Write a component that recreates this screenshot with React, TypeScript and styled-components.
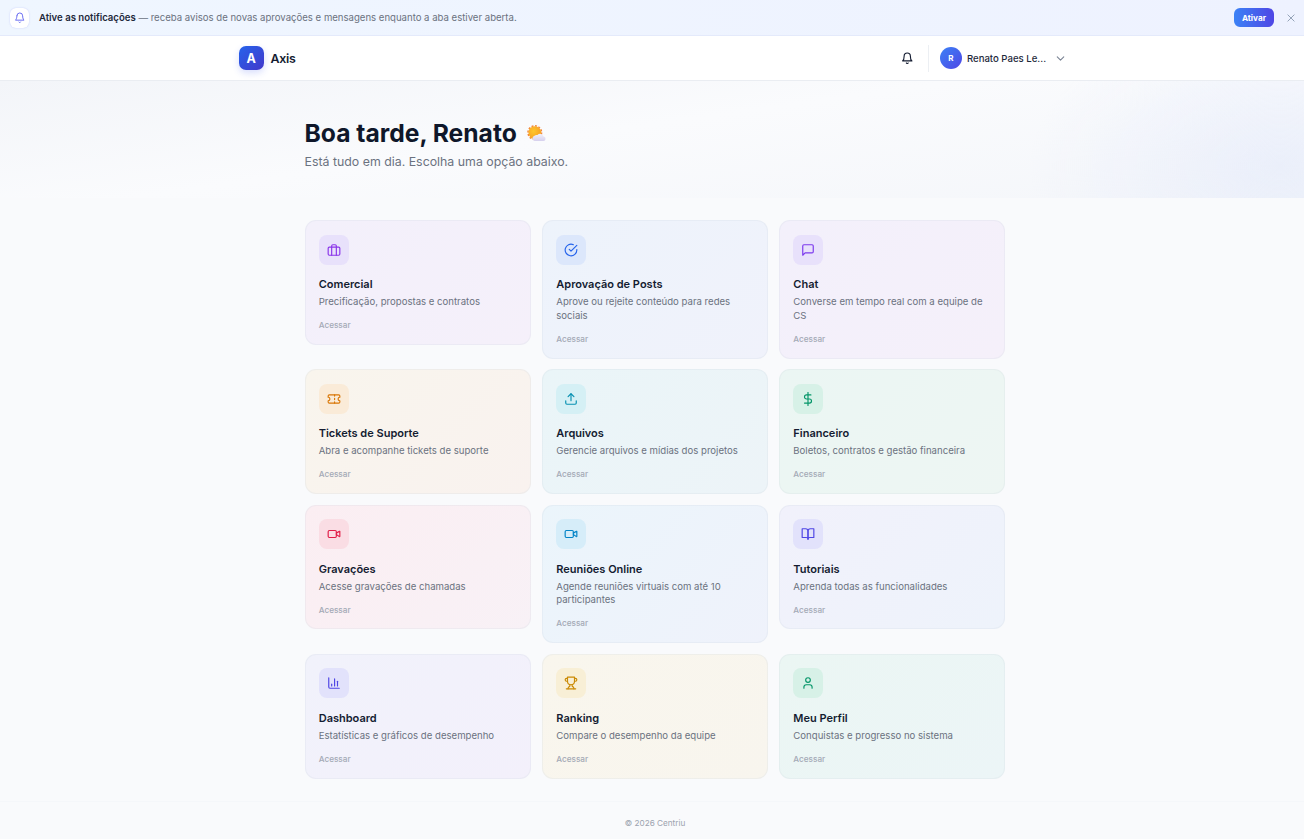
import React from 'react';
import styled, { createGlobalStyle } from 'styled-components';

const GlobalStyle = createGlobalStyle`
  * { box-sizing: border-box; }
  body {
    margin: 0;
    background: #f9fafc;
    font-family: Inter, "Liberation Sans", sans-serif;
    color: #141c31;
    overflow: hidden;
  }
  h1, h2, p { margin: 0; }
  button { font-family: inherit; border: 0; background: none; padding: 0; }
`;

const Page = styled.div`
  display: flex;
  flex-direction: column;
  height: 839px;
`;

const Banner = styled.div`
  display: flex;
  align-items: center;
  height: 36px;
  flex: none;
  padding: 0 8px 0 9.5px;
  background: linear-gradient(90deg, #eff6ff, #eef2ff);
  border-bottom: 1px solid #e4eafb;
`;

const BannerIcon = styled.span`
  display: flex;
  align-items: center;
  justify-content: center;
  width: 19.5px;
  height: 20px;
  border-radius: 6px;
  background: #fff;
  color: #6366f1;
  box-shadow: 0 0 1.5px rgba(99, 102, 241, 0.35);
`;

const BannerText = styled.p`
  flex: 1;
  margin-left: 10px;
  font-size: 9.59px;
  line-height: 14px;
  color: #6b7280;
  strong { font-weight: 600; color: #1e293b; }
`;

const ActivateButton = styled.button`
  width: 40px;
  height: 19.5px;
  border-radius: 6px;
  background: linear-gradient(90deg, #3b82f6, #4f46e5);
  color: #fff;
  font-size: 8.2px;
  font-weight: 700;
`;

const CloseButton = styled.button`
  display: flex;
  margin-left: 12px;
  color: #94a3b8;
`;

const Header = styled.header`
  flex: none;
  height: 44.5px;
  background: #fff;
  border-bottom: 1px solid #eaedf2;
`;

const HeaderInner = styled.div`
  display: flex;
  align-items: center;
  width: 827.5px;
  height: 44px;
  margin: 0 auto 0 239px;
`;

const Logo = styled.span`
  display: flex;
  align-items: center;
  justify-content: center;
  width: 24.5px;
  height: 24.5px;
  border-radius: 7px;
  background: linear-gradient(135deg, #2563eb, #4338ca);
  color: #fff;
  font-size: 12.5px;
  font-weight: 700;
  box-shadow: 0 3px 7px rgba(59, 92, 240, 0.2);
`;

const Brand = styled.span`
  flex: 1;
  margin-left: 7px;
  font-size: 12.4px;
  font-weight: 600;
  letter-spacing: -0.02em;
`;

const Divider = styled.span`
  width: 1px;
  height: 27px;
  margin: 0 10.3px 0 14.7px;
  background: #eceff3;
`;

const Avatar = styled.span`
  display: flex;
  align-items: center;
  justify-content: center;
  width: 22.4px;
  height: 22.4px;
  border-radius: 50%;
  background: linear-gradient(135deg, #3b82f6, #4f46e5);
  color: #fff;
  font-size: 8px;
  font-weight: 700;
`;

const UserName = styled.span`
  width: 86.6px;
  margin-left: 4.9px;
  font-size: 9.6px;
  font-weight: 500;
  white-space: nowrap;
  color: #1e293b;
`;

const UserChevron = styled.span`
  display: flex;
  color: #7b8494;
`;

const Hero = styled.section`
  flex: none;
  height: 117.8px;
  padding: 37px 0 0 304.5px;
  background:
    radial-gradient(ellipse 250px 150px at 1280px 85px, rgba(224, 231, 250, 0.5), rgba(224, 231, 250, 0)),
    linear-gradient(172deg, #f3f5f9 0%, #fafbfd 45%, #f4f6fa 100%);
`;

const Greeting = styled.h1`
  display: flex;
  align-items: center;
  gap: 10.5px;
  font-size: 24.65px;
  line-height: 30px;
  font-weight: 700;
  color: #0f172a;
`;

const Subtitle = styled.p`
  margin-top: 5px;
  font-size: 12.35px;
  line-height: 18px;
  color: #6b7280;
`;

const Grid = styled.main`
  display: grid;
  grid-template-columns: 226.9px 226.4px 226px;
  column-gap: 10.7px;
  row-gap: 10.5px;
  align-items: start;
  margin: 21.7px 0 0 304.5px;
`;

const Card = styled.article<{ $from: string; $to: string }>`
  padding: 13.8px 13.2px 12.9px;
  border: 1px solid rgba(203, 213, 225, 0.22);
  border-radius: 11px;
  background: linear-gradient(135deg, ${(p) => p.$from}, ${(p) => p.$to}) border-box;
`;

const IconTile = styled.span<{ $bg: string; $color: string }>`
  display: flex;
  align-items: center;
  justify-content: center;
  width: 30px;
  height: 30px;
  border-radius: 8px;
  background: ${(p) => p.$bg};
  color: ${(p) => p.$color};
`;

const CardTitle = styled.h2`
  margin-top: 11.2px;
  font-size: 11px;
  line-height: 16px;
  font-weight: 600;
`;

const CardText = styled.p`
  margin-top: 3px;
  font-size: 9.6px;
  line-height: 13.6px;
  color: #6b7280;
`;

const CardLink = styled.span`
  display: block;
  margin-top: 10.5px;
  font-size: 8.2px;
  line-height: 12px;
  font-weight: 500;
  color: #a3a9b5;
`;

const Footer = styled.footer`
  margin-top: auto;
  height: 38px;
  border-top: 1px solid #f5f7fa;
  padding: 14px 0 0 6px;
  text-align: center;
  font-size: 8.2px;
  line-height: 14px;
  color: #9ca3af;
`;

interface IconProps {
  size?: number;
  stroke?: number;
  children: React.ReactNode;
}

const Icon = ({ size = 14, stroke = 2, children }: IconProps) => (
  <svg
    width={size}
    height={size}
    viewBox="0 0 24 24"
    fill="none"
    stroke="currentColor"
    strokeWidth={stroke}
    strokeLinecap="round"
    strokeLinejoin="round"
  >
    {children}
  </svg>
);

const bell = (
  <>
    <path d="M6 8a6 6 0 0 1 12 0c0 7 3 9 3 9H3s3-2 3-9" />
    <path d="M10.3 21a1.94 1.94 0 0 0 3.4 0" />
  </>
);

const video = (
  <>
    <path d="m16 13 5.223 3.482a.5.5 0 0 0 .777-.416V7.87a.5.5 0 0 0-.752-.432L16 10.5" />
    <rect x="2" y="6" width="14" height="12" rx="2" />
  </>
);

const SunCloud = () => (
  <svg width="19" height="18" viewBox="0 0 19 18">
    <defs>
      <radialGradient id="sun" cx="40%" cy="40%">
        <stop offset="0" stopColor="#fdc62d" />
        <stop offset="1" stopColor="#f9a825" />
      </radialGradient>
      <linearGradient id="cloud" x1="0" y1="0" x2="0" y2="1">
        <stop offset="0" stopColor="#f1f1fa" />
        <stop offset="1" stopColor="#d6d0ee" />
      </linearGradient>
    </defs>
    <circle cx="7.8" cy="8.6" r="6.8" fill="none" stroke="#f2853c" strokeWidth="1.5" strokeDasharray="2 1.56" />
    <circle cx="7.8" cy="8.6" r="6.4" fill="url(#sun)" />
    <path d="M7.8 17a2.7 2.7 0 0 1-.3-5.3 3 3 0 0 1 3-.6 3.5 3.5 0 0 1 6.1 1.5 2.2 2.2 0 0 1-.5 4.4z" fill="url(#cloud)" />
  </svg>
);

const cards = [
  {
    title: 'Comercial', text: 'Precificação, propostas e contratos',
    from: '#f3f0fb', to: '#f5f0fa', bg: '#e8e1fb', color: '#8b36ea',
    icon: (<><rect x="2" y="7" width="20" height="14" rx="2" /><path d="M16 21V5a2 2 0 0 0-2-2h-4a2 2 0 0 0-2 2v16" /></>),
  },
  {
    title: 'Aprovação de Posts', text: 'Aprove ou rejeite conteúdo para redes sociais',
    from: '#edf3fb', to: '#f0f2fb', bg: '#dce7fb', color: '#2563eb',
    icon: (<><path d="M22 11.08V12a10 10 0 1 1-5.93-9.14" /><path d="m22 4-10 10.01-3-3" /></>),
  },
  {
    title: 'Chat', text: 'Converse em tempo real com a equipe de CS',
    from: '#f3f0fb', to: '#f5f0fa', bg: '#e8e1fb', color: '#7c3aed',
    icon: <path d="M21 15a2 2 0 0 1-2 2H7l-4 4V5a2 2 0 0 1 2-2h14a2 2 0 0 1 2 2z" />,
  },
  {
    title: 'Tickets de Suporte', text: 'Abra e acompanhe tickets de suporte',
    from: '#f9f5ed', to: '#f9f2ef', bg: '#faebd8', color: '#d97706',
    icon: (<><path d="M2 9a3 3 0 0 1 0 6v2a2 2 0 0 0 2 2h16a2 2 0 0 0 2-2v-2a3 3 0 0 1 0-6V7a2 2 0 0 0-2-2H4a2 2 0 0 0-2 2Z" /><path d="M13 5v2" /><path d="M13 17v2" /><path d="M13 11v2" /></>),
  },
  {
    title: 'Arquivos', text: 'Gerencie arquivos e mídias dos projetos',
    from: '#eaf5f8', to: '#edf4f8', bg: '#d5f0f5', color: '#0891b2',
    icon: (<><path d="M21 15v4a2 2 0 0 1-2 2H5a2 2 0 0 1-2-2v-4" /><path d="m17 8-5-5-5 5" /><path d="M12 3v12" /></>),
  },
  {
    title: 'Financeiro', text: 'Boletos, contratos e gestão financeira',
    from: '#ebf6f3', to: '#eef6f3', bg: '#d7f1e7', color: '#059669',
    icon: (<><path d="M12 1v22" /><path d="M17 5H9.5a3.5 3.5 0 0 0 0 7h5a3.5 3.5 0 0 1 0 7H6" /></>),
  },
  {
    title: 'Gravações', text: 'Acesse gravações de chamadas',
    from: '#fbeef2', to: '#f8f1f6', bg: '#fadde4', color: '#e11d48', icon: video,
  },
  {
    title: 'Reuniões Online', text: 'Agende reuniões virtuais com até 10 participantes',
    from: '#ebf5fb', to: '#eff2fb', bg: '#d6edf9', color: '#0284c7', icon: video,
  },
  {
    title: 'Tutoriais', text: 'Aprenda todas as funcionalidades',
    from: '#f1f1fb', to: '#eef3fb', bg: '#e2e2fb', color: '#4f46e5',
    icon: (<><path d="M2 3h6a4 4 0 0 1 4 4v14a3 3 0 0 0-3-3H2z" /><path d="M22 3h-6a4 4 0 0 0-4 4v14a3 3 0 0 1 3-3h7z" /></>),
  },
  {
    title: 'Dashboard', text: 'Estatísticas e gráficos de desempenho',
    from: '#f1f2fb', to: '#f3f0fb', bg: '#e2e2fb', color: '#4f46e5',
    icon: (<><path d="M3 3v16a2 2 0 0 0 2 2h16" /><path d="M18 17V9" /><path d="M13 17V5" /><path d="M8 17v-3" /></>),
  },
  {
    title: 'Ranking', text: 'Compare o desempenho da equipe',
    from: '#f9f6ed', to: '#f8f5ee', bg: '#f8efd6', color: '#ca8a04',
    icon: (<><path d="M6 9H4.5a2.5 2.5 0 0 1 0-5H6" /><path d="M18 9h1.5a2.5 2.5 0 0 0 0-5H18" /><path d="M4 22h16" /><path d="M10 14.66V17c0 .55-.47.98-.97 1.21C7.85 18.75 7 20.24 7 22" /><path d="M14 14.66V17c0 .55.47.98.97 1.21C16.15 18.75 17 20.24 17 22" /><path d="M18 2H6v7a6 6 0 0 0 12 0V2Z" /></>),
  },
  {
    title: 'Meu Perfil', text: 'Conquistas e progresso no sistema',
    from: '#ebf6f3', to: '#ecf5f7', bg: '#d7f1e7', color: '#059669',
    icon: (<><path d="M19 21v-2a4 4 0 0 0-4-4H9a4 4 0 0 0-4 4v2" /><circle cx="12" cy="7" r="4" /></>),
  },
];

export default function App() {
  return (
    <Page>
      <GlobalStyle />
      <Banner>
        <BannerIcon><Icon size={11.5}>{bell}</Icon></BannerIcon>
        <BannerText>
          <strong>Ative as notificações</strong> — receba avisos de novas aprovações e mensagens enquanto a aba estiver aberta.
        </BannerText>
        <ActivateButton>Ativar</ActivateButton>
        <CloseButton aria-label="Fechar">
          <Icon size={10} stroke={2.4}><path d="M19.5 4.5l-15 15" /><path d="m4.5 4.5 15 15" /></Icon>
        </CloseButton>
      </Banner>
      <Header>
        <HeaderInner>
          <Logo>A</Logo>
          <Brand>Axis</Brand>
          <Icon size={12.5} stroke={2.2}>{bell}</Icon>
          <Divider />
          <Avatar>R</Avatar>
          <UserName>Renato Paes Le...</UserName>
          <UserChevron><Icon size={13}><path d="m6 9 6 6 6-6" /></Icon></UserChevron>
        </HeaderInner>
      </Header>
      <Hero>
        <Greeting>Boa tarde, Renato <SunCloud /></Greeting>
        <Subtitle>Está tudo em dia. Escolha uma opção abaixo.</Subtitle>
      </Hero>
      <Grid>
        {cards.map((c) => (
          <Card key={c.title} $from={c.from} $to={c.to}>
            <IconTile $bg={c.bg} $color={c.color}><Icon>{c.icon}</Icon></IconTile>
            <CardTitle>{c.title}</CardTitle>
            <CardText>{c.text}</CardText>
            <CardLink>Acessar</CardLink>
          </Card>
        ))}
      </Grid>
      <Footer>© 2026 Centriu</Footer>
    </Page>
  );
}
